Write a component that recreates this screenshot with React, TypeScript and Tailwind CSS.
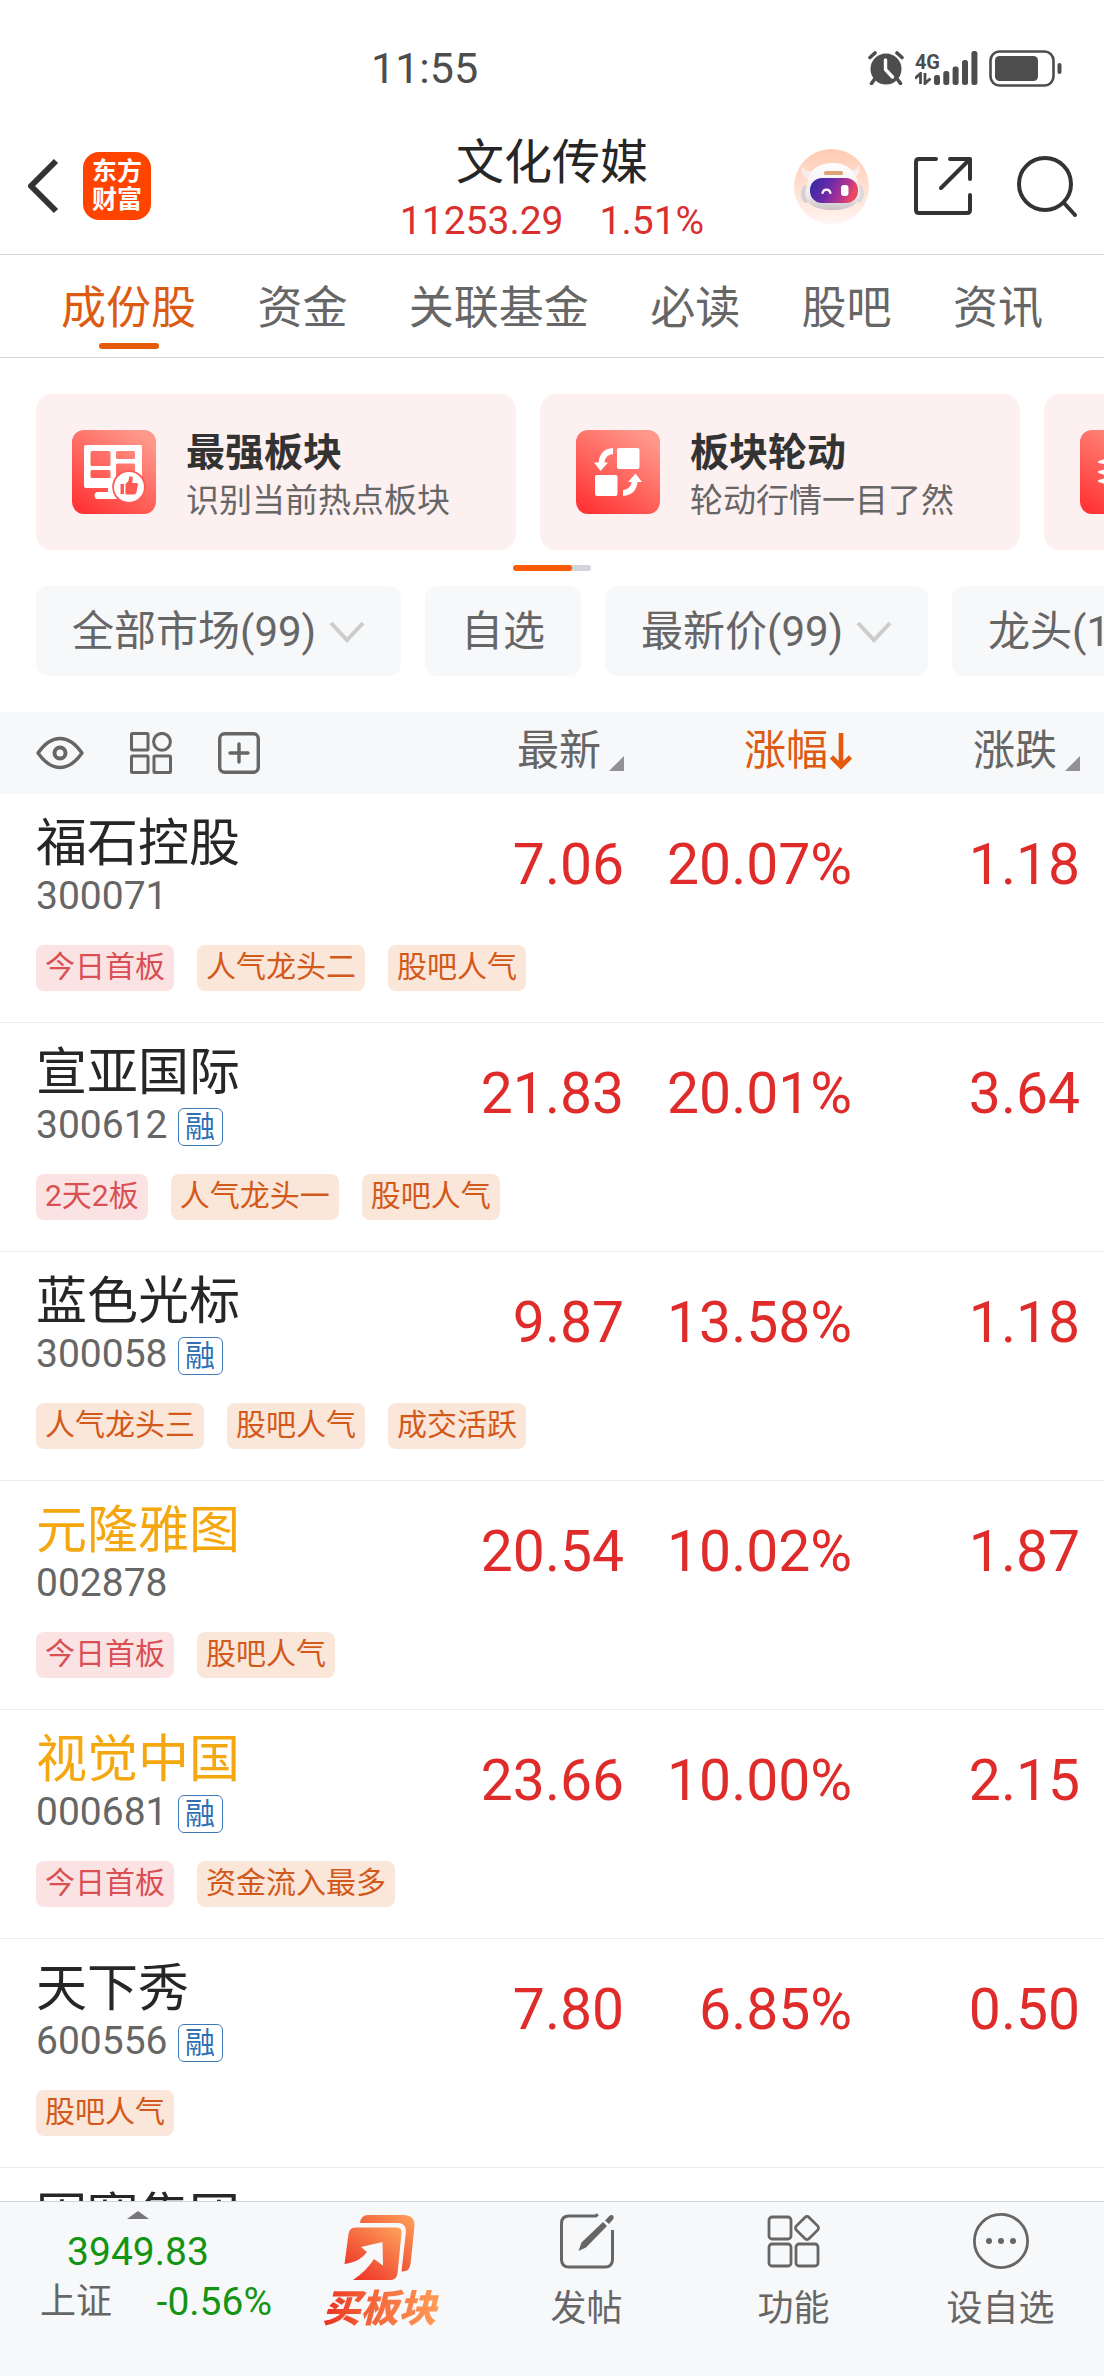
import React from "react";

type TagKind = "red" | "orange";
type Stock = {
  name: string;
  code?: string;
  margin?: boolean;
  watched?: boolean;
  price?: string;
  pct?: string;
  chg?: string;
  tags: { text: string; kind: TagKind }[];
};

const red = (text: string) => ({ text, kind: "red" as const });
const orange = (text: string) => ({ text, kind: "orange" as const });

const stocks: Stock[] = [
  { name: "福石控股", code: "300071", price: "7.06", pct: "20.07%", chg: "1.18", tags: [red("今日首板"), orange("人气龙头二"), orange("股吧人气")] },
  { name: "宣亚国际", code: "300612", margin: true, price: "21.83", pct: "20.01%", chg: "3.64", tags: [red("2天2板"), orange("人气龙头一"), orange("股吧人气")] },
  { name: "蓝色光标", code: "300058", margin: true, price: "9.87", pct: "13.58%", chg: "1.18", tags: [orange("人气龙头三"), orange("股吧人气"), orange("成交活跃")] },
  { name: "元隆雅图", code: "002878", watched: true, price: "20.54", pct: "10.02%", chg: "1.87", tags: [red("今日首板"), orange("股吧人气")] },
  { name: "视觉中国", code: "000681", margin: true, watched: true, price: "23.66", pct: "10.00%", chg: "2.15", tags: [red("今日首板"), orange("资金流入最多")] },
  { name: "天下秀", code: "600556", margin: true, price: "7.80", pct: "6.85%", chg: "0.50", tags: [orange("股吧人气")] },
  { name: "因赛集团", tags: [] },
];

const tabs = ["成份股", "资金", "关联基金", "必读", "股吧", "资讯"];

function StatusBar() {
  return (
    <div className="grid shrink-0 grid-cols-[1fr_auto] items-center pt-11 pr-[42px]">
      <time className="pl-[371px] text-[43px] leading-[48px] text-[#4d4d4d]">11:55</time>
      <div className="flex items-center gap-[11px] text-[#4d4d4d]">
        <svg width="36" height="34" viewBox="0 0 36 34" fill="none" aria-label="闹钟">
          <circle cx="18" cy="18" r="15.500" fill="currentColor" />
          <path d="M2 6.500 7 2M34 6.500 29 2M6 29l-2.500 3.500M30 29l2.500 3.500" stroke="currentColor" strokeWidth="3.600" strokeLinecap="round" />
          <path d="M17.500 9v9.500l7 7.500" stroke="#fff" strokeWidth="3.400" strokeLinecap="round" strokeLinejoin="round" />
        </svg>
        <div className="flex items-end">
          <div className="flex flex-col">
            <span className="text-[20px] leading-5 font-bold">4G</span>
            <svg width="17" height="13" viewBox="0 0 17 13" fill="none" stroke="currentColor" strokeWidth="2.800" aria-hidden="true">
              <path d="M0 6.500 5.500 1.500V12M10 1v10.500L15.500 6.500" />
            </svg>
          </div>
          <svg className="-ml-1.5" width="44" height="34" viewBox="0 0 44 34" fill="currentColor" aria-label="信号">
            <rect x="0" y="24" width="6" height="10" rx="2.500" />
            <rect x="9.300" y="20" width="6" height="14" rx="2.500" />
            <rect x="18.600" y="15.500" width="6" height="18.500" rx="2.500" />
            <rect x="28" y="9" width="6" height="25" rx="2.500" />
            <rect x="37.400" y="0" width="6" height="34" rx="2.500" />
          </svg>
        </div>
        <svg width="73" height="37" viewBox="0 0 73 37" fill="none" aria-label="电量">
          <rect x="1.500" y="1.500" width="63" height="34" rx="9" stroke="currentColor" strokeWidth="2.600" />
          <rect x="6" y="6" width="43" height="25" rx="4.500" fill="currentColor" />
          <rect x="68.500" y="13" width="4" height="11" rx="2" fill="currentColor" />
        </svg>
      </div>
    </div>
  );
}

function RobotAvatar() {
  return (
    <svg width="75" height="75" viewBox="0 0 75 75" aria-hidden="true">
      <defs>
        <linearGradient id="halo" x1="0" y1="0" x2="0" y2="1">
          <stop offset="0" stopColor="#ffcbb3" />
          <stop offset="0.600" stopColor="#ffe3d7" />
          <stop offset="1" stopColor="#fff5f0" />
        </linearGradient>
        <linearGradient id="visor" x1="0" y1="0" x2="1" y2="0.250">
          <stop offset="0" stopColor="#2e2aa5" />
          <stop offset="0.450" stopColor="#6a2aa8" />
          <stop offset="0.800" stopColor="#b73590" />
          <stop offset="1" stopColor="#ea4763" />
        </linearGradient>
        <linearGradient id="shell" x1="0" y1="0" x2="0" y2="1">
          <stop offset="0" stopColor="#ffffff" />
          <stop offset="0.700" stopColor="#eeeaec" />
          <stop offset="1" stopColor="#c9c2c6" />
        </linearGradient>
      </defs>
      <circle cx="37.500" cy="37.500" r="37.500" fill="url(#halo)" />
      <path d="M8 17c-1 6 0 10 7 13l6-9c-6 2-11 1-13-4ZM65 16c2 6 0 11-7 14l-5-9c6 1 10 0 12-5Z" fill="#f7ece9" />
      <ellipse cx="12" cy="45" rx="5" ry="9" fill="#d6cfd3" />
      <ellipse cx="65" cy="45" rx="5" ry="9" fill="#dfd8dc" />
      <path d="M13 36C14 22 22 15 38 14c16 0 24 8 26 21 3 8 2 15-3 20-10 8-35 8-45 0-5-5-6-11-3-19Z" fill="url(#shell)" />
      <rect x="16" y="29" width="48" height="25" rx="12" fill="url(#visor)" />
      <rect x="30" y="22" width="19" height="4" rx="1.500" fill="#e0a377" />
      <path d="M28.500 44c1-4.500 7-4.500 8 0" fill="none" stroke="#fff" strokeWidth="2.200" strokeLinecap="round" />
      <rect x="47" y="36" width="7.500" height="11" rx="3" fill="#fff" />
    </svg>
  );
}

function Header() {
  return (
    <header className="grid shrink-0 grid-cols-[1fr_auto_1fr] items-center border-b border-[#d6d6d6] px-[27px] pt-9 pb-2.5">
      <div className="flex items-center gap-6">
        <button aria-label="返回" className="text-[#333]">
          <svg width="32" height="56" viewBox="0 0 32 56" fill="none" stroke="currentColor" strokeWidth="6">
            <path d="M29 3 4 28l25 25" strokeLinejoin="round" />
          </svg>
        </button>
        <a href="#home" className="flex size-[68px] flex-col items-center justify-center rounded-2xl bg-[#ff4400] text-[25px] leading-7 font-bold text-white">
          <span>东方</span>
          <span>财富</span>
        </a>
      </div>
      <div className="text-center">
        <h1 className="text-[48px] leading-[70px] text-[#262626]">文化传媒</h1>
        <p className="flex justify-center gap-9 text-[39px] leading-[46px] text-[#d92f2f]">
          <span>11253.29</span>
          <span>1.51%</span>
        </p>
      </div>
      <div className="flex items-center justify-end gap-11 text-[#333]">
        <button aria-label="智能助手"><RobotAvatar /></button>
        <button aria-label="分享">
          <svg width="60" height="60" viewBox="0 0 60 60" fill="none" stroke="currentColor" strokeWidth="4" strokeLinecap="round" strokeLinejoin="round">
            <path d="M23 3H6q-3 0-3 3v48q0 3 3 3h48q3 0 3-3V39M37 3h20v20M57 3 28 32" />
          </svg>
        </button>
        <button aria-label="搜索">
          <svg width="60" height="62" viewBox="0 0 60 62" fill="none" stroke="currentColor" strokeWidth="4" strokeLinecap="round">
            <circle cx="28" cy="29" r="26" />
            <path d="m47 48 11 12" />
          </svg>
        </button>
      </div>
    </header>
  );
}

function Tabs() {
  return (
    <nav className="flex shrink-0 justify-between border-b border-[#d6d6d6] px-[61px]">
      {tabs.map((t, i) => (
        <button key={t} className={`flex flex-col items-center gap-1 pt-6 pb-2 text-[45px] leading-[60px] ${i === 0 ? "text-[#dc5b12]" : "text-[#666]"}`}>
          {t}
          <span className={`h-1.5 w-[60px] rounded-full ${i === 0 ? "bg-[#e65a0c]" : ""}`} />
        </button>
      ))}
    </nav>
  );
}

function BoardIcon() {
  return (
    <svg width="84" height="84" viewBox="0 0 84 84" aria-hidden="true">
      <defs>
        <linearGradient id="tile" x1="0.150" y1="1" x2="0.800" y2="0.050">
          <stop offset="0" stopColor="#ff3333" />
          <stop offset="1" stopColor="#ff988a" />
        </linearGradient>
      </defs>
      <rect width="84" height="84" rx="12" fill="url(#tile)" />
      <path fillRule="evenodd" fill="#fff" d="M14 15h54q2 0 2 2v39q0 2-2 2H14q-2 0-2-2V17q0-2 2-2ZM20 21q-1.500 0-1.500 1.500v12q0 1.500 1.500 1.500h17q1.500 0 1.500-1.500v-12Q38.500 21 37 21ZM45.500 21q-1.500 0-1.500 1.500v5q0 1.500 1.500 1.500h16q1.500 0 1.500-1.500v-5Q63 21 61.500 21ZM20 40q-1.500 0-1.500 1.500v5q0 1.500 1.500 1.500h17q1.500 0 1.500-1.500v-5Q38.500 40 37 40ZM45.500 33.500q-1.500 0-1.500 1.500v13h19V35q0-1.500-1.500-1.500Z" />
      <path d="M36 57v5H26q-3.500 0-3.500 3.500T26 69h22V57Z" fill="#fff" />
      <circle cx="57" cy="57" r="16.800" fill="#ff5a55" />
      <circle cx="57" cy="57" r="15" fill="#fff" />
      <path d="M48.500 54h3.500v10h-3.500ZM53.500 54l3-3 .7-4c.8-1.500 3.600-.8 3.600 1.500 0 2-.8 3.600-.8 4.500h4.600q1.600.2 1.300 2l-1.500 7.600q-.5 1.800-2 1.800h-8.900Z" fill="#ff5a4f" />
    </svg>
  );
}

function RotateIcon() {
  return (
    <svg width="84" height="84" viewBox="0 0 84 84" aria-hidden="true">
      <rect width="84" height="84" rx="12" fill="url(#tile)" />
      <rect x="41" y="18" width="22.500" height="21" rx="2" fill="#fff" />
      <rect x="19" y="45" width="22.500" height="21" rx="2" fill="#fff" />
      <path d="M37 18v6c-6 1-8 4-8.500 8.500H32L24.500 41 18 32.500h4.500C23.500 24 28 18.500 37 18ZM47 66v-6c6-1 8-4 8.500-8H52l7.500-8.500L66 52h-4.500C60.500 60.500 56 65.500 47 66Z" fill="#fff" />
    </svg>
  );
}

function StackIcon() {
  return (
    <svg width="84" height="84" viewBox="0 0 84 84" aria-hidden="true">
      <rect width="84" height="84" rx="12" fill="url(#tile)" />
      <path d="m19 32 23-8 23 8-23 4ZM19 42l23 4 23-4-23 8ZM19 51l23 4 23-4-23 8ZM19 32l10-3v5ZM19 42l10-3v5ZM19 51l10-3v5Z" fill="#fff" stroke="#fff" strokeWidth="2" strokeLinejoin="round" />
    </svg>
  );
}

function FeatureCard({ icon, title, desc }: { icon: React.ReactNode; title: string; desc: string }) {
  return (
    <a href="#feature" className="flex w-[480px] shrink-0 items-center gap-[30px] rounded-2xl bg-[#fdf0f0] px-9 py-[30px] whitespace-nowrap">
      {icon}
      <span className="flex flex-col">
        <strong className="text-[39px] leading-[58px] font-bold text-[#333]">{title}</strong>
        <span className="text-[33px] leading-[38px] text-[#666]">{desc}</span>
      </span>
    </a>
  );
}

function Filter({ label, menu }: { label: string; menu?: boolean }) {
  if (!menu) {
    return <button className="h-[90px] shrink-0 rounded-xl bg-[#f7f8fa] px-9 whitespace-nowrap">{label}</button>;
  }
  return (
    <div className="relative shrink-0">
      <select aria-label={label} className="h-[90px] appearance-none rounded-xl bg-[#f7f8fa] pr-[84px] pl-9">
        <option>{label}</option>
      </select>
      <svg className="pointer-events-none absolute top-[34px] right-9" width="36" height="24" viewBox="0 0 36 24" fill="none" stroke="#ccc" strokeWidth="4" aria-hidden="true">
        <path d="m2 3 16 17L34 3" />
      </svg>
    </div>
  );
}

function Corner() {
  return (
    <svg className="mb-2.5" width="15" height="15" viewBox="0 0 15 15" aria-hidden="true">
      <path d="M15 0v15H0Z" fill="#929296" />
    </svg>
  );
}

function TableHead() {
  return (
    <thead>
      <tr className="h-[82px] bg-[#f7f8fa] text-[42px] leading-[60px] text-[#666]">
        <th scope="col" className="pl-9 font-normal">
          <div className="flex items-center gap-[46px]">
            <button aria-label="显示">
              <svg width="48" height="42" viewBox="0 0 48 42" fill="none" stroke="currentColor" strokeWidth="3.400" strokeLinejoin="round">
                <path d="M2 21C9 11 16 6.500 24 6.500S39 11 46 21C39 31 32 35.500 24 35.500S9 31 2 21Z" />
                <circle cx="24" cy="21" r="5.500" strokeWidth="4" />
              </svg>
            </button>
            <button aria-label="布局">
              <svg width="42" height="42" viewBox="0 0 42 42" fill="none" stroke="currentColor" strokeWidth="3">
                <rect x="1.500" y="1.500" width="16.500" height="16.500" rx="1" />
                <circle cx="32" cy="9.800" r="8.400" />
                <rect x="1.500" y="24" width="16.500" height="16.500" rx="1" />
                <rect x="24" y="24" width="16.500" height="16.500" rx="1" />
              </svg>
            </button>
            <button aria-label="添加">
              <svg width="42" height="42" viewBox="0 0 42 42" fill="none" stroke="currentColor" strokeWidth="3.400" strokeLinecap="round">
                <rect x="1.700" y="1.700" width="38.600" height="38.600" rx="5" />
                <path d="M21 12v18M12 21h18" />
              </svg>
            </button>
          </div>
        </th>
        <th scope="col" className="w-[228px] pr-6 pb-1 font-normal">
          <button className="ml-auto flex items-end gap-2">最新<Corner /></button>
        </th>
        <th scope="col" aria-sort="descending" className="w-[228px] pr-6 pb-1 font-normal text-[#dc5b12]">
          <button className="ml-auto flex items-center gap-[2px]">
            涨幅
            <svg width="22" height="37" viewBox="0 0 22 37" fill="none" stroke="#e65a0c" strokeWidth="4.600" aria-hidden="true">
              <path d="M11 0v33M1.500 24l9.500 9.500L20.500 24" />
            </svg>
          </button>
        </th>
        <th scope="col" className="w-[228px] pr-6 pb-1 font-normal">
          <button className="ml-auto flex items-end gap-2">涨跌<Corner /></button>
        </th>
      </tr>
    </thead>
  );
}

function StockRows({ s }: { s: Stock }) {
  const num = "pt-9 pr-6 text-right align-top text-[57px] leading-[70px] text-[#e02b2b]";
  return (
    <tbody className="border-b border-[#ebebeb]">
      <tr>
        <th scope="row" className="pt-5 pl-9 text-left font-normal whitespace-nowrap">
          <div className={`text-[51px] leading-[60px] ${s.watched ? "text-[#f5a70f]" : "text-[#262626]"}`}>{s.name}</div>
          {s.code && (
            <div className="flex items-center gap-2.5 text-[39px] leading-[44px] text-[#666]">
              {s.code}
              {s.margin && (
                <span className="mt-1 flex h-[38px] w-[45px] items-center justify-center rounded-md border border-[#3f7ab8] text-[30px] leading-9 text-[#2f6fb3]">融</span>
              )}
            </div>
          )}
        </th>
        <td className={num}>{s.price}</td>
        <td className={num}>{s.pct}</td>
        <td className={num}>{s.chg}</td>
      </tr>
      <tr>
        <td colSpan={4} className="px-9 pt-[27px] pb-[31px]">
          <div className="flex gap-[23px]">
            {s.tags.map((t) => (
              <span key={t.text} className={`h-[46px] rounded-lg px-[9px] text-[30px] leading-[44px] ${t.kind === "red" ? "bg-[#fbe3e4] text-[#d94f54]" : "bg-[#fbe6da] text-[#d3591a]"}`}>
                {t.text}
              </span>
            ))}
          </div>
        </td>
      </tr>
    </tbody>
  );
}

function BuyIcon() {
  return (
    <svg width="72" height="68" viewBox="0 0 72 68" aria-hidden="true">
      <defs>
        <linearGradient id="buy" x1="0.050" y1="1" x2="0.900" y2="0">
          <stop offset="0" stopColor="#ee2a22" />
          <stop offset="0.500" stopColor="#f4643e" />
          <stop offset="1" stopColor="#ff9d58" />
        </linearGradient>
      </defs>
      <path fill="url(#buy)" d="M16 9q1-8 8-8h35q12 0 11.500 11l-4 38q-1 8-9 7.500l4.500-40Q62 9 54 9Z" />
      <path fill="url(#buy)" d="M11 13.500h42q5 0 4.500 6l-4 40q-.8 6.500-7 6.500H9c9-6 16-13 21-21l9 6.500L38.500 28 17 33l6 5C17 46 9 49 .500 50L4.500 20q1-6.500 6.500-6.500Z" />
    </svg>
  );
}

function BottomBar() {
  const item = "flex flex-1 flex-col items-center text-[36px] leading-[50px] text-[#666]";
  return (
    <footer className="flex shrink-0 border-t border-[#d0d4d9] bg-[#f7f8fa] pb-[42px]">
      <button className="flex w-1/4 flex-col items-center pt-[9px]">
        <svg width="22" height="8" viewBox="0 0 22 8" aria-hidden="true"><path d="M0 8 11 0l11 8Z" fill="#77777b" /></svg>
        <span className="mt-2 text-[39px] leading-[50px] text-[#149414]">3949.83</span>
        <span className="flex w-full items-center justify-between pr-1 pl-10 text-[39px] leading-[50px]">
          <span className="text-[36px] text-[#666]">上证</span>
          <span className="text-[#149414]">-0.56%</span>
        </span>
      </button>
      <button className={`${item} gap-0.5 pt-3`}>
        <BuyIcon />
        <span className="bg-linear-to-r from-[#e8281f] to-[#ff9d58] bg-clip-text px-1 text-[38px] font-black text-transparent italic">买板块</span>
      </button>
      <button className={`${item} gap-[15px] pt-[11px]`}>
        <svg width="56" height="56" viewBox="0 0 56 56" fill="none" stroke="currentColor" strokeWidth="3" aria-hidden="true">
          <path d="M39 1.500 36.500 3H10q-7.500 0-7.500 7.500v36q0 7.500 7.500 7.500h36q7.500 0 7.500-7.500V17" />
          <path d="m19.500 38 3-8.500L44 9l4 4-21 21.500Z" fill="currentColor" stroke="none" />
          <path d="m46 7.500 4.500-4.700c2.500-2 5.500.8 3.600 3.400L50 11Z" fill="currentColor" stroke="none" />
        </svg>
        发帖
      </button>
      <button className={`${item} gap-[15px] pt-[11px]`}>
        <svg width="56" height="56" viewBox="0 0 56 56" fill="none" stroke="currentColor" strokeWidth="2.800" aria-hidden="true">
          <rect x="3" y="4" width="22" height="22" rx="3" />
          <rect x="3" y="31" width="22" height="22" rx="3" />
          <rect x="30" y="31" width="22" height="22" rx="3" />
          <rect x="32" y="6" width="18" height="18" rx="3" transform="rotate(45 41 15)" />
        </svg>
        功能
      </button>
      <button className={`${item} gap-[15px] pt-[11px]`}>
        <svg width="56" height="56" viewBox="0 0 56 56" fill="none" aria-hidden="true">
          <circle cx="28" cy="28" r="26.600" stroke="currentColor" strokeWidth="2.800" />
          <g fill="currentColor"><circle cx="16" cy="28" r="3" /><circle cx="28" cy="28" r="3" /><circle cx="40" cy="28" r="3" /></g>
        </svg>
        设自选
      </button>
    </footer>
  );
}

export default function App() {
  return (
    <div className="flex h-screen flex-col overflow-hidden bg-white font-[Roboto,'Noto_Sans_CJK_SC',sans-serif]">
      <StatusBar />
      <Header />
      <Tabs />
      <main className="min-h-0 flex-1 overflow-hidden">
        <div className="flex gap-6 overflow-hidden pt-9 pl-9">
          <FeatureCard icon={<BoardIcon />} title="最强板块" desc="识别当前热点板块" />
          <FeatureCard icon={<RotateIcon />} title="板块轮动" desc="轮动行情一目了然" />
          <FeatureCard icon={<StackIcon />} title="板块梯队" desc="梯队结构一览无余" />
        </div>
        <div className="mx-auto mt-[15px] h-1.5 w-[78px] overflow-hidden rounded-full bg-[#d3d5da]">
          <div className="h-full w-3/4 rounded-full bg-[#fa5a05]" />
        </div>
        <div className="mt-[15px] mb-9 flex gap-6 overflow-hidden pl-9 text-[42px] text-[#666]">
          <Filter label="全部市场(99)" menu />
          <Filter label="自选" />
          <Filter label="最新价(99)" menu />
          <Filter label="龙头(12)" menu />
        </div>
        <table className="w-full table-fixed border-collapse">
          <TableHead />
          {stocks.map((s) => <StockRows key={s.name} s={s} />)}
        </table>
      </main>
      <BottomBar />
    </div>
  );
}
